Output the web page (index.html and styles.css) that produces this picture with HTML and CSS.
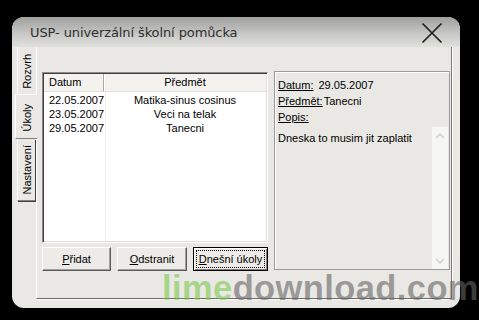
FILE: index.html
```html
<!DOCTYPE html>
<html>
<head>
<meta charset="utf-8">
<link rel="stylesheet" href="styles.css">
</head>
<body>
<div class="window">
  <div class="titlebar">
    <span class="title">USP- univerzální školní pomůcka</span>
    <svg class="close" width="24" height="24" viewBox="0 0 24 24"><path d="M2.5 2.5L21.5 21.5M21.5 2.5L2.5 21.5" stroke="#1e1e1e" stroke-width="1.7" fill="none"/></svg>
  </div>
  <div class="client">
    <div class="tabs">
      <div class="tab t-rozvrh"><span>Rozvrh</span></div>
      <div class="tab active"><span>Úkoly</span></div>
      <div class="tab t-nast"><span>Nastavení</span></div>
    </div>
    <div class="page">
      <div class="left">
        <div class="list">
          <div class="lhead"><div class="c1">Datum</div><div class="c2">Předmět</div></div>
          <div class="lbody">
            <div class="row"><div class="c1">22.05.2007</div><div class="c2">Matika-sinus cosinus</div></div>
            <div class="row"><div class="c1">23.05.2007</div><div class="c2">Veci na telak</div></div>
            <div class="row"><div class="c1">29.05.2007</div><div class="c2">Tanecni</div></div>
          </div>
        </div>
        <div class="buttons">
          <div class="btn b1"><u>P</u>řidat</div>
          <div class="btn b2"><u>O</u>dstranit</div>
          <div class="btn b3 default"><u>D</u>nešní úkoly</div>
        </div>
      </div>
      <div class="detail">
        <div class="line"><u class="lbl">Datum:</u><span class="val1">29.05.2007</span></div>
        <div class="line"><u class="lbl">Předmět:</u><span class="val2">Tanecni</span></div>
        <div class="line"><u class="lbl">Popis:</u></div>
        <div class="memo">
          <div class="memotext">Dneska to musim jit zaplatit</div>
          <div class="scroll">
            <svg width="16" height="12" viewBox="0 0 16 12"><path d="M4 8L8 4L12 8" stroke="#cfcfcf" stroke-width="1.5" fill="none"/></svg>
            <svg width="16" height="12" viewBox="0 0 16 12"><path d="M4 4L8 8L12 4" stroke="#cfcfcf" stroke-width="1.5" fill="none"/></svg>
          </div>
        </div>
      </div>
    </div>
  </div>
</div>
<div class="watermark"><span class="lime">lime</span><span class="dl">download.com</span></div>
</body>
</html>
```

FILE: styles.css
```css
* { box-sizing: border-box; }
html, body { margin: 0; padding: 0; }
body {
  background: #000;
  width: 479px;
  height: 320px;
  overflow: hidden;
  position: relative;
  font-family: "Liberation Sans", Arial, sans-serif;
  font-size: 11px;
  color: #000;
}
.window {
  margin: 17px 0 0 12px;
  width: 448px;
  height: 291px;
  border-radius: 12px;
  overflow: hidden;
  background: #e9e8e4;
}
.titlebar {
  height: 30px;
  background: linear-gradient(#9f9f9d, #c6c6c4 55%, #e0e0dd);
  display: flex;
  align-items: center;
  justify-content: space-between;
  padding: 0 16px 0 18px;
}
.title {
  font-family: "DejaVu Sans", Verdana, sans-serif;
  font-size: 13px;
  letter-spacing: -0.1px;
  color: #2e2e2e;
  margin-top: 1px;
}
.close { margin-top: 2px; }
.client {
  display: flex;
  height: 261px;
  padding-left: 3px;
}
.tabs {
  width: 21px;
  display: flex;
  flex-direction: column;
}
.tab {
  display: flex;
  align-items: center;
  justify-content: center;
  background: #e9e8e4;
}
.tab span {
  writing-mode: vertical-rl;
  transform: rotate(180deg);
  white-space: nowrap;
}
.t-rozvrh {
  height: 47px;
  margin-left: 2px;
  width: 18px;
  border-left: 1px solid #fff;
  padding-top: 2px;
}
.active {
  height: 45px;
  width: 22px;
  border-left: 1px solid #fff;
  border-top: 1px solid #fff;
  border-bottom: 1px solid #808080;
  position: relative;
  z-index: 1;
  padding-top: 3px;
}
.t-nast {
  height: 62px;
  margin-left: 2px;
  width: 18px;
  border-left: 1px solid #fff;
  border-bottom: 1px solid #808080;
  box-shadow: 1px 1px 0 #404040;
}
.page {
  width: 416px;
  height: 252px;
  border-left: 1px solid #fff;
  border-right: 1px solid #7a7a7a;
  border-bottom: 1px solid #6a6a6a;
  box-shadow: 1px 1px 0 #fff;
  display: flex;
  padding: 25px 0 0 5px;
}
.left {
  width: 226px;
  display: flex;
  flex-direction: column;
}
.list {
  height: 171px;
  background: #fff;
  border: 1px solid;
  border-color: #8a8a8a #fff #fff #8a8a8a;
  box-shadow: inset 1px 1px 0 #404040, inset -1px -1px 0 #e0ded8;
  padding: 1px;
  display: flex;
  flex-direction: column;
}
.lhead {
  display: flex;
  height: 18px;
  background: #f3f2ef;
  border-bottom: 1px solid #e2e1dd;
  line-height: 17px;
}
.c1 { width: 60px; padding-left: 5px; flex: none; }
.c2 { flex: 1; text-align: center; }
.lhead .c1 { border-right: 1px solid #a8a8a8; box-shadow: 1px 0 0 #fff; }
.lbody {
  flex: 1;
  padding-top: 1px;
  background: linear-gradient(90deg, transparent 61px, #eeeeee 61px, #eeeeee 62px, transparent 62px);
}
.row {
  display: flex;
  height: 14px;
  line-height: 14px;
}
.buttons {
  display: flex;
  gap: 6px;
  margin-top: 4px;
}
.btn {
  height: 24px;
  line-height: 22px;
  text-align: center;
  background: #ecebe7;
  border: 1px solid;
  border-color: #fff #5a5a5a #5a5a5a #fff;
  box-shadow: inset -1px -1px 0 #a0a0a0;
}
.b1 { width: 69px; }
.b2 { width: 70px; }
.b3 { width: 75px; }
.default {
  border: 1px solid #000;
  box-shadow: inset 1px 1px 0 #fff, inset -1px -1px 0 #808080;
  outline: 1px dotted #000;
  outline-offset: -4px;
}
.detail {
  width: 176px;
  height: 199px;
  margin: -1px 0 0 6px;
  border: 1px solid #9a9a9a;
  box-shadow: inset 1px 1px 0 #fff;
  padding: 5px 1px 0 3px;
  display: flex;
  flex-direction: column;
}
.line {
  height: 16px;
  line-height: 16px;
  white-space: nowrap;
}
.lbl { text-decoration: underline; }
.val1 { margin-left: 5px; }
.val2 { margin-left: 1px; }
.memo {
  flex: 1;
  display: flex;
  margin-top: 2px;
}
.memotext {
  flex: 1;
  line-height: 16px;
  padding-top: 3px;
}
.scroll {
  width: 16px;
  background: #f6f6f4;
  display: flex;
  flex-direction: column;
  justify-content: space-between;
  padding: 3px 0 2px;
}
.watermark {
  position: absolute;
  left: 162px;
  top: 268px;
  font-family: "Liberation Sans", Arial, sans-serif;
  font-weight: bold;
  font-size: 34.5px;
  letter-spacing: 0.4px;
  line-height: 40px;
  white-space: nowrap;
}
.lime { color: rgba(125, 200, 75, 0.6); }
.dl { color: rgba(100, 100, 100, 0.6); }
```
